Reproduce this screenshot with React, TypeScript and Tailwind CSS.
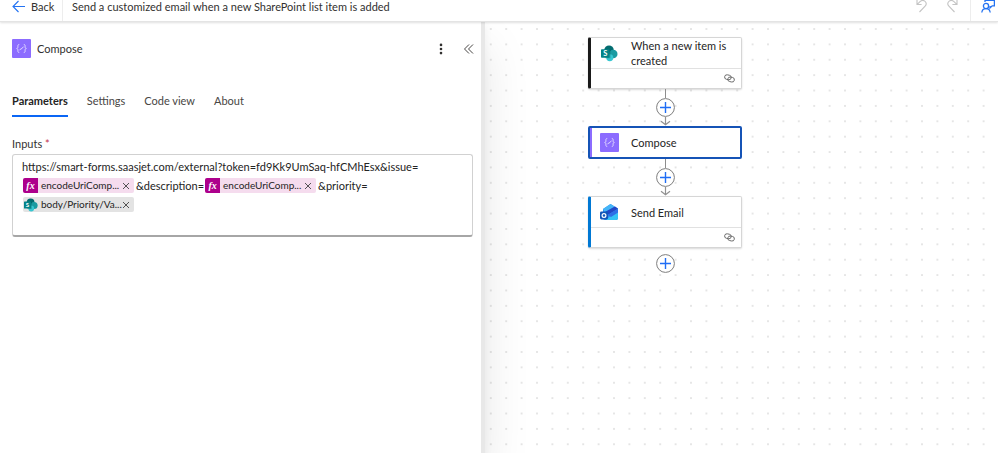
import type { ReactNode } from 'react';
import { useId } from 'react';

const TABS = ['Parameters', 'Settings', 'Code view', 'About'];

export default function App() {
  return (
    <div className="flex min-h-screen flex-col overflow-hidden bg-white font-[Lato,'Open_Sans',sans-serif] text-[11px] leading-[15px] text-[#323130]">
      <TopBar />
      <main className="flex flex-1">
        <SidePanel />
        <Canvas />
      </main>
    </div>
  );
}

function TopBar() {
  return (
    <header className="relative z-20 flex h-[22px] shrink-0 items-stretch border-b border-[#e4e4e4] bg-white shadow-[0_1px_2px_rgba(0,0,0,0.12)]">
      <button className="flex w-[63px] items-start gap-1.5 border-r border-[#ededed] pl-3">
        <svg width="13" height="13" viewBox="0 0 13 13" fill="none" stroke="#2473f2" strokeWidth="1.1">
          <path d="M13 6.5H1M6.500 1 1 6.500l5.500 5.500" />
        </svg>
        <span className="leading-[14px]">Back</span>
      </button>
      <h1 className="flex-1 truncate pl-[9px] leading-[14px]">
        Send a customized email when a new SharePoint list item is added
      </h1>
      <div className="flex items-start gap-5 pr-3">
        <button aria-label="Undo">
          <UndoIcon />
        </button>
        <button aria-label="Redo" className="-scale-x-100">
          <UndoIcon />
        </button>
      </div>
      <button aria-label="Feedback" className="flex w-7 items-start justify-end border-l border-[#ededed] pr-[3px]">
        <svg width="14" height="13" viewBox="0 0 14 13" fill="none" stroke="#2473f2" strokeWidth="1.300">
          <path d="M4 2V0M4 .3h9.400v5.500h-2.200L9 8V6" />
          <circle cx="5" cy="6" r="2.600" />
          <path d="M.8 12.500c.3-2.300 2-3.900 4.200-3.900s3.900 1.600 4.200 3.900" />
        </svg>
      </button>
    </header>
  );
}

function SidePanel() {
  return (
    <section className="relative z-10 w-[485px] max-w-1/2 shrink-0 border-r-4 border-[#e8e8e8] bg-white pt-[17px] pr-2 pl-3 shadow-[0_24px_44px_rgba(0,0,0,0.10),0_4px_8px_rgba(0,0,0,0.05)]">
      <div className="flex items-center">
        <span className="flex size-[19px] items-center justify-center rounded-[1px] bg-[#8c6cff]">
          <ComposeGlyph />
        </span>
        <h2 className="ml-1.5 flex-1">Compose</h2>
        <button aria-label="More commands" className="mr-4">
          <svg width="12" height="12" viewBox="0 0 12 12" fill="#323130">
            <circle cx="6" cy="1.900" r="1.300" />
            <circle cx="6" cy="6" r="1.300" />
            <circle cx="6" cy="10.100" r="1.300" />
          </svg>
        </button>
        <button aria-label="Collapse panel" className="-mr-0.5">
          <svg width="12" height="12" viewBox="0 0 12 12" fill="none" stroke="#484644">
            <path d="M6 1.500 1.500 6 6 10.500M10 1.500 5.500 6l4.500 4.500" />
          </svg>
        </button>
      </div>

      <div role="tablist" className="mt-[35px] flex gap-[19px]">
        {TABS.map((tab, i) => (
          <button
            key={tab}
            role="tab"
            aria-selected={i === 0}
            className={
              i === 0
                ? 'border-b-2 border-[#0a66f5] pb-[7px] font-bold text-[#242424]'
                : 'border-b-2 border-transparent pb-[7px] text-[#484644]'
            }
          >
            {tab}
          </button>
        ))}
      </div>

      <div className="mt-[19px]">
        <span id="inputs-label">
          Inputs <span className="text-[#c4314b]">*</span>
        </span>
        <div
          role="textbox"
          aria-labelledby="inputs-label"
          aria-multiline="true"
          contentEditable
          suppressContentEditableWarning
          spellCheck={false}
          className="mt-[3px] h-[83px] rounded-[3px] border border-b-2 border-[#d1d1d1] border-b-[#a6a6a6] px-[9px] pt-0.5 leading-[19px] text-[#242424] outline-none"
        >
          <div>https://smart-forms.saasjet.com/external?token=fd9Kk9UmSaq-hfCMhEsx&amp;issue=</div>
          <div className="flex items-center">
            <Token label="encodeUriComp..." />
            &amp;description=
            <Token label="encodeUriComp..." />
            &amp;priority=
          </div>
          <div className="flex h-[19px] items-center">
            <Token label="body/Priority/Va..." sharePoint />
          </div>
        </div>
      </div>
    </section>
  );
}

function Token({ label, sharePoint = false }: { label: string; sharePoint?: boolean }) {
  return (
    <span
      contentEditable={false}
      suppressContentEditableWarning
      className={`mr-0.5 ml-px flex h-[15px] w-[111px] shrink-0 items-center overflow-hidden rounded-[2px] text-[10px] leading-[15px] ${
        sharePoint ? 'bg-[#e3e3e3]' : 'bg-[#f5dcee]'
      }`}
    >
      {sharePoint ? (
        <span className="flex w-[15px] shrink-0 justify-center">
          <SharePointIcon size={14} />
        </span>
      ) : (
        <span className="flex h-full w-[15px] shrink-0 items-center justify-center bg-[#ad008c] font-['Liberation_Serif',serif] text-[10px] font-bold text-white italic">
          fx
        </span>
      )}
      <span className="ml-[3px] flex-1 whitespace-nowrap">{label}</span>
      <button aria-label={`Remove ${label}`} className="mr-1">
        <svg width="8" height="8" viewBox="0 0 8 8" stroke="#424242" strokeWidth=".9">
          <path d="m1 1 6 6M7 1 1 7" />
        </svg>
      </button>
    </span>
  );
}

function Canvas() {
  const dots = useId();
  return (
    <section className="relative flex-1 pt-[15px] pl-[103px]">
      <svg aria-hidden="true" className="absolute inset-0 size-full">
        <pattern id={dots} x="-1.900" y="-.7" width="15.400" height="15.380" patternUnits="userSpaceOnUse">
          <rect x="7" y="7" width="1.400" height="1.400" fill="#cfcfcf" />
        </pattern>
        <rect width="100%" height="100%" fill={`url(#${dots})`} />
      </svg>

      <div className="relative flex w-[154px] flex-col items-center">
        <Card title="When a new item is created" accent="border-l-[#1a1a1a]" icon={<SharePointIcon size={17} />} />
        <Connector />
        <div className="flex h-[33px] w-full items-center rounded-[2px] border-2 border-[#1553b6] bg-white text-[#242424]">
          <span className="h-full w-0.5 bg-[#8c6cff]" />
          <span className="ml-2 flex size-[19px] items-center justify-center rounded-[1px] bg-[#8c6cff]">
            <ComposeGlyph />
          </span>
          <span className="ml-3">Compose</span>
        </div>
        <Connector />
        <Card title="Send Email" accent="border-l-[#0078d4]" icon={<MailIcon />} />
        <div className="mt-1.5">
          <AddButton />
        </div>
      </div>
    </section>
  );
}

function Card({ title, accent, icon }: { title: string; accent: string; icon: ReactNode }) {
  return (
    <div
      className={`h-[52px] w-full rounded-[2px] border border-l-[3px] border-[#d6d6d6] bg-white text-[#242424] shadow-[0_1px_2px_rgba(0,0,0,0.15)] ${accent}`}
    >
      <div className="flex h-[31px] items-center border-b border-[#e1e1e1]">
        <span className="ml-[9px] flex w-[19px] justify-center">{icon}</span>
        <span className="ml-3 w-[104px]">{title}</span>
      </div>
      <div className="flex h-[19px] items-center justify-end pr-1.5">
        <LinkIcon />
      </div>
    </div>
  );
}

function Connector() {
  return (
    <div className="flex h-[37px] flex-col items-center">
      <span className="h-[9px] w-px bg-[#8d8d8d]" />
      <AddButton />
      <svg width="11" height="9" viewBox="0 0 11 9" fill="none" stroke="#919191" strokeWidth="1.200">
        <path d="M5.500 0v8M1 4.200l4.500 3.600L10 4.200" />
      </svg>
    </div>
  );
}

function AddButton() {
  return (
    <button aria-label="Insert a new step" className="block">
      <svg width="19" height="19" viewBox="0 0 19 19" fill="none">
        <circle cx="9.500" cy="9.500" r="8.900" fill="#fff" stroke="#7d7d7d" />
        <path d="M9.500 4v11M4 9.500h11" stroke="#1f6df5" strokeWidth="1.400" />
      </svg>
    </button>
  );
}

function UndoIcon() {
  return (
    <svg width="11" height="13" viewBox="0 0 11 13" fill="none" stroke="#c4c4c4" strokeWidth="1.100">
      <path d="M1 0v4.500h4.600M1.200 4.300 4 1.600c1.700-1.600 3.900-1.500 5.200-.1 1.300 1.400 1.200 3.300-.1 4.700L3.500 12" />
    </svg>
  );
}

function ComposeGlyph() {
  return (
    <svg width="11" height="11" viewBox="0 0 11 11" fill="none" stroke="#e9e2ff" strokeWidth=".9">
      <path d="M3.200 1.500c-1.300 0-1.300.8-1.300 1.800 0 1.200 0 1.900-1.200 2.200 1.200.3 1.200 1 1.200 2.200 0 1 0 1.800 1.300 1.800M7.800 1.500c1.300 0 1.300.8 1.300 1.800 0 1.200 0 1.900 1.200 2.200-1.200.3-1.200 1-1.200 2.200 0 1 0 1.800-1.300 1.800M3.700 7.200l1-1.300 1.200-.3 1.500-1.900" />
    </svg>
  );
}

function SharePointIcon({ size }: { size: number }) {
  return (
    <svg width={size} height={size} viewBox="0 0 18 18">
      <circle cx="8.500" cy="5.500" r="5" fill="#036c70" />
      <circle cx="13" cy="9.500" r="4.500" fill="#1a9ba1" />
      <circle cx="9.300" cy="13.500" r="3.700" fill="#37c6d0" />
      <rect x="4" y="5" width="6" height="9" fill="#025659" opacity=".35" />
      <rect x="0" y="4.500" width="9" height="9" rx=".8" fill="#038387" />
      <text x="4.500" y="11.800" textAnchor="middle" fontSize="8" fontWeight="700" fill="#fff">
        S
      </text>
    </svg>
  );
}

function MailIcon() {
  return (
    <svg width="19" height="18" viewBox="0 0 19 18">
      <path d="M3 6 10.500 1 18 5.500V15a2 2 0 0 1-2 2H5a2 2 0 0 1-2-2z" fill="#2a8ff0" />
      <path d="M3 6 10.500 1l4 2.400L5 9.500z" fill="#45b5f7" />
      <path d="M4 9.500 15 3.500l3 2.200L7.500 12z" fill="#2347c5" />
      <path d="M18 5.700V15a2 2 0 0 1-2 2H6z" fill="#35c3f5" />
      <path d="M7.500 12 18 5.700v3.800L11 14z" fill="#2f6ee6" />
      <rect x="0" y="8.500" width="8" height="8" rx="1.400" fill="#1257b8" />
      <circle cx="4" cy="12.500" r="1.900" fill="none" stroke="#fff" strokeWidth="1.200" />
    </svg>
  );
}

function LinkIcon() {
  return (
    <svg width="11" height="9" viewBox="0 0 11 9" fill="none" stroke="#666" strokeWidth=".9">
      <rect x=".6" y="1" width="6.600" height="4.600" rx="2.300" transform="rotate(12 4 3.300)" />
      <rect x="3.800" y="3.200" width="6.600" height="4.600" rx="2.300" transform="rotate(12 7 5.500)" />
    </svg>
  );
}
